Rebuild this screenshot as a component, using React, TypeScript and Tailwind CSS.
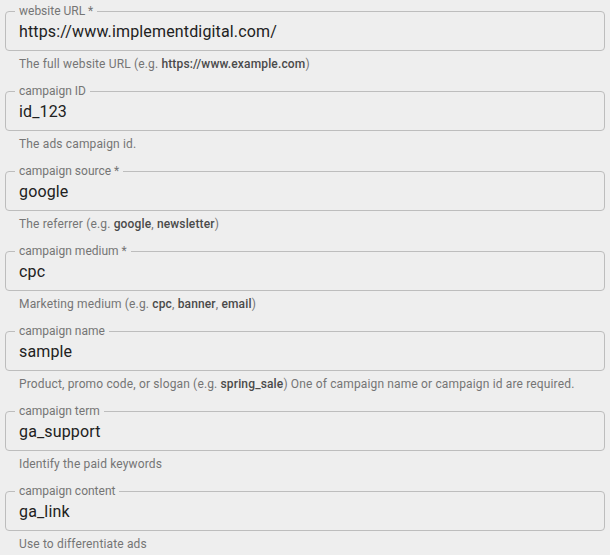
import type { ReactNode } from 'react'

type Field = {
    label: string
    value: string
    help: ReactNode
}

const fields: Field[] = [
    {
        label: 'website URL *',
        value: 'https://www.implementdigital.com/',
        help: <>The full website URL (e.g. <b>https://www.example.com</b>)</>,
    },
    { label: 'campaign ID', value: 'id_123', help: 'The ads campaign id.' },
    {
        label: 'campaign source *',
        value: 'google',
        help: <>The referrer (e.g. <b>google</b>, <b>newsletter</b>)</>,
    },
    {
        label: 'campaign medium *',
        value: 'cpc',
        help: <>Marketing medium (e.g. <b>cpc</b>, <b>banner</b>, <b>email</b>)</>,
    },
    {
        label: 'campaign name',
        value: 'sample',
        help: (
            <>
                Product, promo code, or slogan (e.g. <b>spring_sale</b>) One of campaign name or campaign id are
                required.
            </>
        ),
    },
    { label: 'campaign term', value: 'ga_support', help: 'Identify the paid keywords' },
    { label: 'campaign content', value: 'ga_link', help: 'Use to differentiate ads' },
]

function TextField({ label, value, help }: Field) {
    return (
        <div className="mb-[13px]">
            <fieldset className="mx-[5px] border border-[#bdbdbd] rounded-[4px] pl-[9px] pr-3 pb-[9px]">
                <legend className="px-1 text-[12px] leading-[14px] text-[#757575]">{label}</legend>
                <div className="pl-1 pt-[4px] text-[16px] leading-[19px] tracking-[0.15px] text-[#212121]">{value}</div>
            </fieldset>
            <p className="mt-[6px] pl-[19px] text-[12px] leading-[14px] tracking-[0.15px] text-[#757575] [&_b]:font-medium [&_b]:text-[#4a4a4a]">
                {help}
            </p>
        </div>
    )
}

export default function App() {
    return (
        <div className="min-h-screen bg-[#eeeeee] pt-1 font-['Roboto',sans-serif]">
            {fields.map(f => (
                <TextField key={f.label} {...f} />
            ))}
        </div>
    )
}
